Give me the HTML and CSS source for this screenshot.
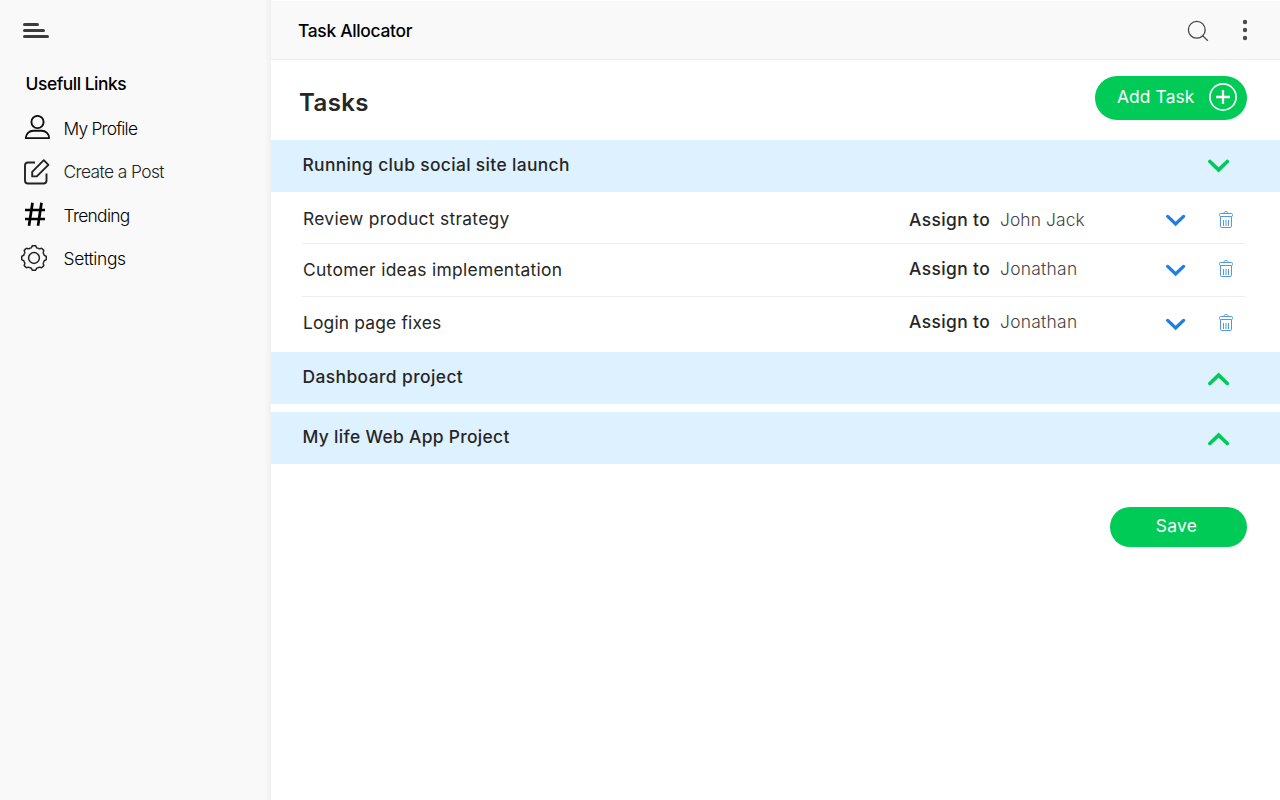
FILE: index.html
```html
<!DOCTYPE html>
<html lang="en">
<head>
<meta charset="utf-8">
<title>Task Allocator</title>
<link rel="stylesheet" href="styles.css">
</head>
<body>
<svg class="defs" width="0" height="0">
  <symbol id="chevron" viewBox="0 0 22 14"><path d="M1.900 2.500 10.600 10.900 19.300 2.500" fill="none" stroke="currentColor" stroke-width="3.600" stroke-linecap="round" stroke-linejoin="miter"/></symbol>
  <symbol id="trash" viewBox="0 0 14 18"><g fill="none" stroke="currentColor"><rect x=".5" y="2.5" width="13" height="3" rx="1"/><path d="M5 2.4C5 1 5.6 .6 7 .6S9 1 9 2.4M1.5 5.7V15.3Q1.5 16.5 2.7 16.5H11.3Q12.5 16.5 12.5 15.3V5.7"/><path d="M4.5 9V15M9.5 9V15"/><path d="M7 9V15" stroke-width="2" opacity=".5"/></g></symbol>
</svg>
<div class="app">
  <aside class="sidebar">
    <svg class="burger" width="26" height="16" viewBox="0 0 26 16"><path d="M1.5 1.5H14.5M1.5 7.5H20.5M1.5 13.5H24.5" stroke="#3c3c3c" stroke-width="3" stroke-linecap="round"/></svg>
    <h2 class="side-title"><span>Usefull Links</span></h2>
    <nav class="links">
      <a class="link"><span class="icon user"><svg width="26" height="25" viewBox="0 0 26 25"><g fill="none" stroke="#111" stroke-width="1.9"><circle cx="12.5" cy="7" r="6.1"/><path d="M.9 23.1C.9 19 4 15.8 8.5 15.8H16.5C21 15.8 24.1 19 24.1 23.1Z" stroke-linejoin="round"/></g></svg></span><span class="label profile">My Profile</span></a>
      <a class="link"><span class="icon edit"><svg width="26" height="26" viewBox="0 0 26 26"><g fill="none" stroke="#222" stroke-width="1.9" stroke-linejoin="round"><path d="M11 3.5H4Q1 3.5 1 6.5V21.5Q1 24.5 4 24.5H19.5Q22.5 24.5 22.5 21.5V14.5"/><path d="M8.2 17.4V12.8L19.8 1.2 24.4 5.8 12.8 17.4Z"/></g></svg></span><span class="label post">Create a Post</span></a>
      <a class="link"><span class="icon hash"><svg width="20" height="24" viewBox="0 0 20 24"><path d="M0 8H20M0 17H20M7.500 .8 4 23.800M16.500 .8 13 23.800" fill="none" stroke="#000" stroke-width="2.700"/></svg></span><span class="label trending">Trending</span></a>
      <a class="link"><span class="icon gear"><svg width="26" height="26" viewBox="-13 -13 26 26"><g fill="none" stroke="#222" stroke-width="1.5"><circle r="5.4"/>
        <g id="half"><path id="tooth" d="M-3.2-10Q-2.4-10.2-2.2-11.2Q-2-12.3-1.2-12.3H1.2Q2-12.3 2.2-11.2Q2.4-10.2 3.2-10Q4.1-9.9 4.81-9.33"/><use href="#tooth" transform="rotate(45)"/><use href="#tooth" transform="rotate(90)"/><use href="#tooth" transform="rotate(135)"/></g><use href="#half" transform="rotate(180)"/></g></svg></span><span class="label settings">Settings</span></a>
    </nav>
  </aside>
  <main class="main">
    <header class="topbar">
      <h1 class="app-title"><span>Task Allocator</span></h1>
      <div class="tools">
        <svg width="22" height="22" viewBox="0 0 22 22"><g fill="none" stroke="#444" stroke-width="1.3"><circle cx="9.8" cy="9.8" r="8.4"/><path d="M15.6 15.6 20.8 20.8"/></g></svg>
        <svg class="dots" width="6" height="22" viewBox="0 0 6 22" fill="#4a4a4a"><circle cx="3" cy="3" r="2.2"/><circle cx="3" cy="11" r="2.2"/><circle cx="3" cy="19" r="2.2"/></svg>
      </div>
    </header>
    <section class="heading">
      <h2 class="tasks"><span>Tasks</span></h2>
      <button class="btn add"><span>Add Task</span><svg width="28" height="28" viewBox="0 0 28 28"><g fill="none" stroke="#fff"><circle cx="14" cy="14" r="13.1" stroke-width="1.7"/><path d="M14 7V21M7 14H21" stroke-width="2.3"/></g></svg></button>
    </section>
    <section class="group">
      <h3 class="project open"><span class="p1">Running club social site launch</span><svg class="chev"><use href="#chevron"/></svg></h3>
      <ul class="list">
        <li class="task first"><span class="name review">Review product strategy</span><span class="assign">Assign to</span><span class="person john">John Jack</span><svg class="drop"><use href="#chevron"/></svg><svg class="trash"><use href="#trash"/></svg></li>
        <li class="task second"><span class="name ideas">Cutomer ideas implementation</span><span class="assign">Assign to</span><span class="person">Jonathan</span><svg class="drop"><use href="#chevron"/></svg><svg class="trash"><use href="#trash"/></svg></li>
        <li class="task third"><span class="name login">Login page fixes</span><span class="assign">Assign to</span><span class="person">Jonathan</span><svg class="drop"><use href="#chevron"/></svg><svg class="trash"><use href="#trash"/></svg></li>
      </ul>
    </section>
    <section class="closed">
      <h3 class="project"><span class="p2">Dashboard project</span><svg class="chev up"><use href="#chevron"/></svg></h3>
      <h3 class="project"><span class="p3">My life Web App Project</span><svg class="chev up"><use href="#chevron"/></svg></h3>
    </section>
    <button class="btn save"><span>Save</span></button>
  </main>
</div>
</body>
</html>
```

FILE: styles.css
```css
* { box-sizing: border-box; }
body { margin: 0; font-family: Inter, "Liberation Sans", sans-serif; font-size: 17.4px; color: #262626; background: #fff; }
h1, h2, h3, ul { margin: 0; padding: 0; font-weight: 500; font-size: inherit; list-style: none; }
ul { font-weight: 400; }
svg { display: block; flex: none; }
span { white-space: nowrap; }
.defs { position: absolute; }
.app { display: flex; width: 1280px; height: 800px; overflow: hidden; }

.sidebar { width: 271px; flex: none; background: linear-gradient(90deg, transparent 264px, #f0f0f0 271px), #f9f9f9; color: #000; }
.burger { margin: 23px 0 0 23px; }
.side-title { margin: 33px 0 0 25.6px; line-height: 24px; letter-spacing: -.47px; }
.links { display: grid; grid-template-rows: 43px 44px 43px 44px; padding-top: 11px; }
.link { display: flex; align-items: center; font-weight: 300; }
.icon { width: 38.5px; margin: 0 0 2px 25px; }
.user { margin-bottom: 3px; }
.edit { width: 39.5px; margin-left: 24px; margin-bottom: 0; }
.hash { margin-bottom: 3px; }
.gear { width: 42.5px; margin-left: 21px; margin-bottom: 3px; }
.profile { letter-spacing: -.8px; }
.post { letter-spacing: -.6px; margin-bottom: 2px; color: #222; }
.trending { letter-spacing: -.68px; }
.settings { letter-spacing: -.32px; margin-bottom: 2px; }

.main { flex: 1; display: flex; flex-direction: column; }
.topbar { height: 60px; flex: none; display: flex; justify-content: space-between; align-items: center; padding: 1px 32px 0 27px; border-top: 1px solid #fff; border-bottom: 1px solid #eee; background: #f9f9f9; color: #000; }
.app-title { letter-spacing: -.3px; }
.tools { display: flex; gap: 33px; }
.dots { margin-top: -1px; }
.heading { height: 80px; flex: none; display: flex; justify-content: space-between; padding: 16px 33px 0 28px; }
.tasks { font-size: 24px; font-weight: 600; line-height: 54px; letter-spacing: .4px; }
.btn { border: 0; padding: 0; font: inherit; color: #fff; background: #00cb56; border-radius: 22px; }
.add { width: 152px; height: 44px; display: flex; justify-content: space-between; align-items: center; padding: 0 10px 2px 22px; letter-spacing: .1px; }
.add span { margin-bottom: 2px; }
.project { height: 52px; flex: none; display: flex; justify-content: space-between; align-items: center; padding: 0 50px 4px 31.5px; background: #def1ff; font-weight: 500; }
.p1 { letter-spacing: .35px; }
.p2 { letter-spacing: .42px; }
.p3 { letter-spacing: .33px; }
.chev { width: 22px; height: 14px; margin-top: 4px; color: #00cb56; }
.up { transform: scaleY(-1); margin-top: 5px; }
.list { padding: 0 34px 8px 31px; }
.task { display: grid; grid-template-columns: 607px 91px 165.5px 20px 33.5px 14px; align-items: center; margin-right: 1px; }
.task + .task { border-top: 1px solid #eee; }
.first { height: 51px; }
.second { height: 53px; }
.third { height: 48px; }
.name { letter-spacing: .3px; padding-left: 1px; }
.login { letter-spacing: .17px; }
.assign { font-weight: 500; letter-spacing: .4px; }
.person { font-weight: 300; color: #444; letter-spacing: .28px; }
.john { letter-spacing: .1px; }
.drop { width: 20px; height: 13px; color: #1f7fdc; }
.trash { width: 14px; height: 18px; color: #4d9be6; grid-column: 6; }
.first .name { margin-top: 2px; }
.first .assign, .first .person, .first .trash { margin-top: 4px; }
.first .drop { margin-top: 6px; }
.second .name, .second .trash { margin-bottom: 2px; }
.second .assign, .second .person { margin-bottom: 4px; }
.third .name, .third .trash { margin-top: 4px; }
.third .assign, .third .person { margin-top: 2px; }
.third .drop { margin-top: 7px; }
.closed { display: grid; gap: 8px; }
.save { width: 137px; height: 40px; margin: 43px 33px 0 auto; padding: 0 4px 4px 0; letter-spacing: .3px; }
```
